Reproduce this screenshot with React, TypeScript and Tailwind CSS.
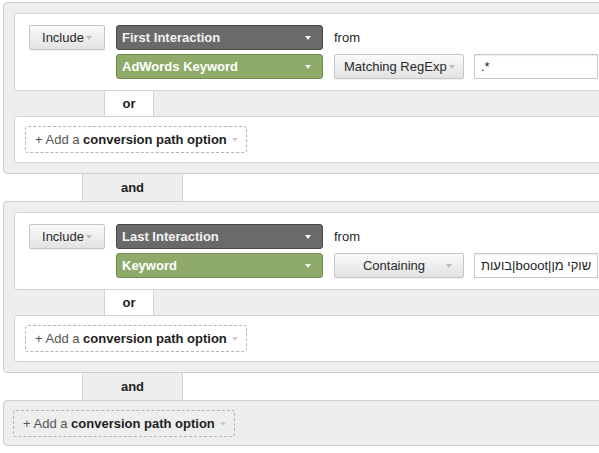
import type { ReactNode } from "react";

function Caret({ color = "border-t-[#bdbdbd]" }: { color?: string }) {
  return (
    <span
      className={`inline-block h-0 w-0 border-x-[3px] border-t-[4px] border-x-transparent ${color}`}
    />
  );
}

function GrayButton({
  label,
  className,
  center,
}: {
  label: string;
  className: string;
  center?: boolean;
}) {
  return (
    <div
      className={`flex h-[25px] items-center rounded-[2px] border border-[#c6c6c6] bg-gradient-to-b from-[#fafafa] to-[#e2e2e2] text-[#2a2a2a] shadow-[0_1px_0_rgba(0,0,0,0.05)] ${className}`}
    >
      <span className={`whitespace-nowrap ${center ? "flex-1 text-center" : ""}`}>
        {label}
      </span>
      <span className="ml-[2px] flex items-center">
        <Caret />
      </span>
    </div>
  );
}

function DimSelect({ label, tone }: { label: string; tone: "dark" | "green" }) {
  const cls =
    tone === "dark"
      ? "bg-[#6a6a6a] border-[#474747] text-[#f2f2f2]"
      : "bg-[#8fab69] border-[#718d4f] text-white";
  return (
    <div
      className={`flex h-[25px] w-[207px] items-center justify-between rounded-[3px] border pl-[5px] pr-[11px] font-bold ${cls}`}
    >
      <span>{label}</span>
      <Caret color="border-t-[#f4f4f4]" />
    </div>
  );
}

function AddOption({ className = "" }: { className?: string }) {
  return (
    <div
      className={`flex h-[27px] w-[222px] items-center rounded-[3px] border border-dashed border-[#b4b4b4] pl-[9px] ${className}`}
    >
      <span className="text-[#555]">+ Add a&nbsp;</span>
      <span className="font-bold text-[#1e1e1e]">conversion path option</span>
      <span className="ml-[5px] flex items-center">
        <Caret color="border-t-[#cccccc]" />
      </span>
    </div>
  );
}

function Tab({ children, className }: { children: ReactNode; className: string }) {
  return (
    <div
      className={`flex items-center justify-center border-x font-bold text-[#1e1e1e] ${className}`}
    >
      {children}
    </div>
  );
}

function Condition({
  interaction,
  dimension,
  match,
  matchCenter,
  value,
}: {
  interaction: string;
  dimension: string;
  match: string;
  matchCenter?: boolean;
  value: string;
}) {
  return (
    <div className="rounded-[3px] border border-[#d4d4d4] bg-white px-[14px] py-[11px]">
      <div className="grid grid-cols-[76px_207px_auto] grid-rows-[25px_25px] gap-x-[11px] gap-y-[4px]">
        <GrayButton label="Include" className="w-[76px] justify-center" />
        <DimSelect label={interaction} tone="dark" />
        <div className="flex items-center pl-[-1px] text-[#1e1e1e]">from</div>
        <div />
        <DimSelect label={dimension} tone="green" />
        <div className="flex gap-[10px]">
          <GrayButton
            label={match}
            center={matchCenter}
            className={matchCenter ? "w-[130px] pl-[9px] pr-[11px]" : "w-[130px] pl-[9px]"}
          />
          <div className="flex h-[25px] w-[124px] items-center border border-[#c9c9c9] bg-white pl-[6px] text-[#1e1e1e] shadow-[inset_0_1px_1px_rgba(0,0,0,0.08)]">
            {value}
          </div>
        </div>
      </div>
    </div>
  );
}

function Group(props: Parameters<typeof Condition>[0]) {
  return (
    <div className="rounded-[4px] border border-[#cfcfcf] bg-[#eeeeee] p-[10px]">
      <Condition {...props} />
      <Tab className="ml-[90px] h-[25px] w-[50px] border-[#d4d4d4] bg-white">or</Tab>
      <div className="rounded-[3px] border border-[#d4d4d4] bg-white px-[10px] py-[9px]">
        <AddOption />
      </div>
    </div>
  );
}

export default function App() {
  return (
    <div className="h-[453px] w-[599px] overflow-hidden bg-white font-['Liberation_Sans',Arial,sans-serif] text-[13px] leading-none">
      <div className="w-[640px] pl-[3px] pt-[2px]">
        <Group
          interaction="First Interaction"
          dimension="AdWords Keyword"
          match="Matching RegExp"
          value=".*"
        />
        <Tab className="ml-[79px] h-[27px] w-[101px] border-[#d4d4d4] bg-[#eeeeee]">and</Tab>
        <Group
          interaction="Last Interaction"
          dimension="Keyword"
          match="Containing"
          matchCenter
          value="בועות|booot|שוקי מן"
        />
        <Tab className="ml-[79px] h-[27px] w-[101px] border-[#d4d4d4] bg-[#eeeeee]">and</Tab>
        <div className="rounded-[4px] border border-[#cfcfcf] bg-[#eeeeee] px-[9px] pb-[8px] pt-[9px]">
          <AddOption />
        </div>
      </div>
    </div>
  );
}
